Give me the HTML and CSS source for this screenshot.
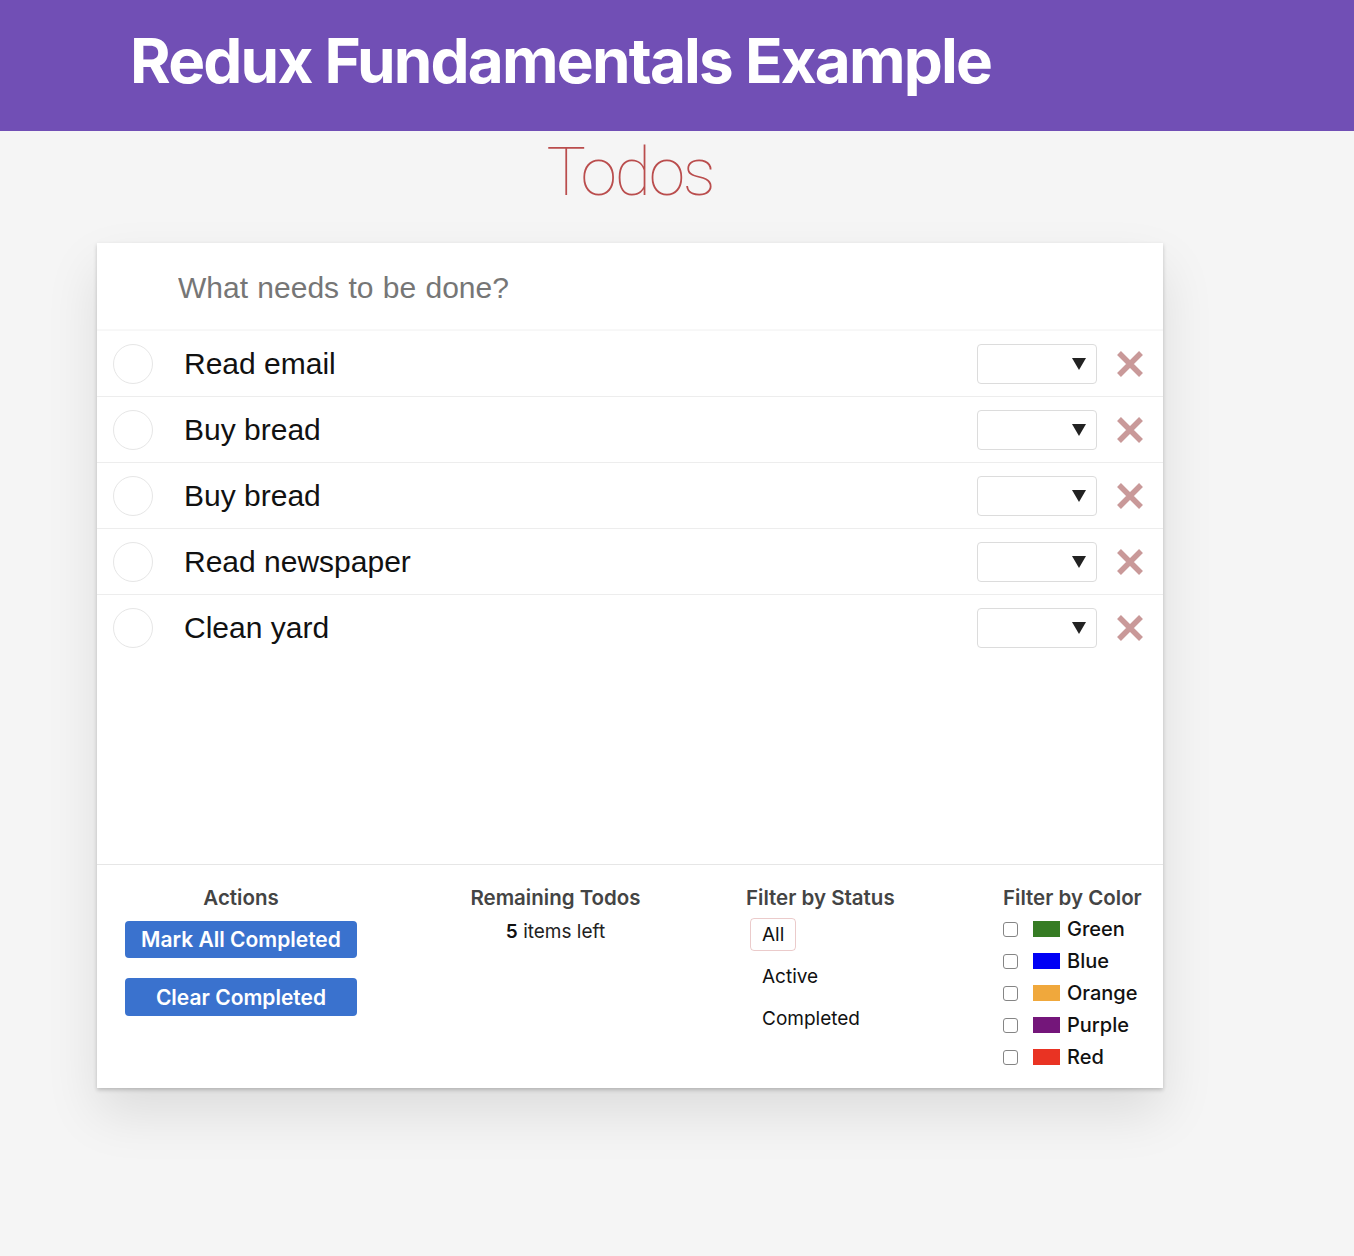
FILE: index.html
```html
<!DOCTYPE html>
<html lang="en">
<head>
<meta charset="utf-8">
<title>Redux Fundamentals Example</title>
<link rel="stylesheet" href="styles.css">
</head>
<body>
<header class="app-header">
  <h1 class="app-title">Redux Fundamentals Example</h1>
</header>
<main class="page">
  <section class="todo-wrap">
    <h2 class="todos-title">Todos</h2>
    <div class="todoapp">
      <input class="new-todo" placeholder="What needs to be done?">
      <ul class="todo-list">
        <li class="todo">
          <span class="toggle"></span>
          <span class="todo-text">Read email</span>
          <div class="color-select"><svg class="arrow" width="14" height="12" viewBox="0 0 14 12"><polygon points="0,0 14,0 7,12"/></svg></div>
          <button class="destroy" aria-label="delete"><svg width="28" height="28" viewBox="0 0 28 28"><path d="M3 3 L25 25 M25 3 L3 25"/></svg></button>
        </li>
        <li class="todo">
          <span class="toggle"></span>
          <span class="todo-text">Buy bread</span>
          <div class="color-select"><svg class="arrow" width="14" height="12" viewBox="0 0 14 12"><polygon points="0,0 14,0 7,12"/></svg></div>
          <button class="destroy" aria-label="delete"><svg width="28" height="28" viewBox="0 0 28 28"><path d="M3 3 L25 25 M25 3 L3 25"/></svg></button>
        </li>
        <li class="todo">
          <span class="toggle"></span>
          <span class="todo-text">Buy bread</span>
          <div class="color-select"><svg class="arrow" width="14" height="12" viewBox="0 0 14 12"><polygon points="0,0 14,0 7,12"/></svg></div>
          <button class="destroy" aria-label="delete"><svg width="28" height="28" viewBox="0 0 28 28"><path d="M3 3 L25 25 M25 3 L3 25"/></svg></button>
        </li>
        <li class="todo">
          <span class="toggle"></span>
          <span class="todo-text">Read newspaper</span>
          <div class="color-select"><svg class="arrow" width="14" height="12" viewBox="0 0 14 12"><polygon points="0,0 14,0 7,12"/></svg></div>
          <button class="destroy" aria-label="delete"><svg width="28" height="28" viewBox="0 0 28 28"><path d="M3 3 L25 25 M25 3 L3 25"/></svg></button>
        </li>
        <li class="todo">
          <span class="toggle"></span>
          <span class="todo-text">Clean yard</span>
          <div class="color-select"><svg class="arrow" width="14" height="12" viewBox="0 0 14 12"><polygon points="0,0 14,0 7,12"/></svg></div>
          <button class="destroy" aria-label="delete"><svg width="28" height="28" viewBox="0 0 28 28"><path d="M3 3 L25 25 M25 3 L3 25"/></svg></button>
        </li>
      </ul>
      <footer class="footer">
        <div class="col col-actions">
          <h5 class="col-title">Actions</h5>
          <button class="btn">Mark All Completed</button>
          <button class="btn">Clear Completed</button>
        </div>
        <div class="col col-remaining">
          <h5 class="col-title">Remaining Todos</h5>
          <div class="todo-count"><strong>5</strong> items left</div>
        </div>
        <div class="col col-status">
          <h5 class="col-title">Filter by Status</h5>
          <ul class="filters">
            <li><a class="filter selected">All</a></li>
            <li><a class="filter">Active</a></li>
            <li><a class="filter">Completed</a></li>
          </ul>
        </div>
        <div class="col col-colors">
          <h5 class="col-title">Filter by Color</h5>
          <label class="color-opt"><input type="checkbox" class="cb"><span class="swatch swatch-green"></span>Green</label>
          <label class="color-opt"><input type="checkbox" class="cb"><span class="swatch swatch-blue"></span>Blue</label>
          <label class="color-opt"><input type="checkbox" class="cb"><span class="swatch swatch-orange"></span>Orange</label>
          <label class="color-opt"><input type="checkbox" class="cb"><span class="swatch swatch-purple"></span>Purple</label>
          <label class="color-opt"><input type="checkbox" class="cb"><span class="swatch swatch-red"></span>Red</label>
        </div>
      </footer>
    </div>
  </section>
</main>
</body>
</html>
```

FILE: styles.css
```css
* { box-sizing: border-box; }

html, body {
  margin: 0;
  padding: 0;
}

body {
  background: #f5f5f5;
  font-family: "Liberation Sans", Arial, sans-serif;
  color: #111;
  min-height: 1256px;
}

.app-header {
  height: 131px;
  background: #714fb5;
  padding-left: 130px;
}

.app-title {
  margin: 0;
  font-family: Inter, "Liberation Sans", sans-serif;
  font-weight: 700;
  font-size: 62px;
  line-height: 121px;
  color: #fff;
  letter-spacing: -1.8px;
}

.page {
  padding-left: 97px;
}

.todo-wrap {
  width: 1066px;
}

.todos-title {
  margin: 2px 0 30px;
  text-align: center;
  font-family: Roboto, "Liberation Sans", sans-serif;
  font-weight: 100;
  font-size: 66px;
  line-height: 80px;
  letter-spacing: -2.2px;
  color: rgba(175, 47, 47, 0.85);
}

.todoapp {
  background: #fff;
  box-shadow: 0 2px 4px rgba(0, 0, 0, 0.2), 0 25px 50px rgba(0, 0, 0, 0.1);
}

.new-todo {
  display: block;
  width: 100%;
  height: 88px;
  margin: 0;
  border: none;
  outline: none;
  padding: 2px 16px 0 81px;
  font-family: "Liberation Sans", Arial, sans-serif;
  font-size: 30px;
  word-spacing: 1px;
  color: #111;
  background: #fff;
  box-shadow: inset 0 -2px 1px rgba(0, 0, 0, 0.03);
}

.new-todo::placeholder {
  color: #767676;
}

.todo-list {
  list-style: none;
  margin: 0;
  padding: 0;
  min-height: 533px;
}

.todo {
  display: flex;
  align-items: center;
  height: 66px;
  padding-left: 16px;
  border-bottom: 1px solid #ededed;
}

.todo:last-child {
  border-bottom: none;
  height: 65px;
}

.toggle {
  width: 40px;
  height: 40px;
  border-radius: 50%;
  border: 1px solid #e6e6e6;
  margin-right: 31px;
  flex: none;
}

.todo-text {
  flex: 1;
  font-size: 30px;
  color: #111;
}

.color-select {
  width: 120px;
  height: 40px;
  border: 1px solid #dcdcdc;
  border-radius: 4px;
  display: flex;
  align-items: center;
  justify-content: flex-end;
  padding-right: 10px;
  margin-right: 19px;
  flex: none;
}

.arrow polygon {
  fill: #222;
}

.destroy {
  width: 28px;
  height: 28px;
  padding: 0;
  margin: 0 19px 0 0;
  border: none;
  background: none;
  flex: none;
  display: block;
}

.destroy svg {
  display: block;
}

.destroy path {
  stroke: #c99999;
  stroke-width: 5.5;
  fill: none;
}

.footer {
  border-top: 1px solid #e6e6e6;
  height: 224px;
  padding: 21px 0 0 28px;
  display: grid;
  grid-template-columns: 232px 389px 257px 1fr;
  align-items: start;
  font-family: Inter, "Liberation Sans", sans-serif;
}

.col {
  display: flex;
  flex-direction: column;
}

.col-title {
  margin: 0;
  font-size: 20.5px;
  line-height: 24px;
  font-weight: 600;
  color: #444;
}

.col-actions {
  align-items: stretch;
  text-align: center;
}

.btn {
  height: 37px;
  margin-top: 11px;
  border: none;
  border-radius: 4px;
  background: #3a72ce;
  color: #fff;
  font-family: Inter, "Liberation Sans", sans-serif;
  font-size: 21px;
  font-weight: 600;
  padding: 0;
}

.btn + .btn {
  margin-top: 20px;
  height: 38px;
}

.col-remaining {
  text-align: center;
  padding-left: 8px;
}

.todo-count {
  margin-top: 11px;
  font-size: 19px;
  line-height: 22px;
  color: #222;
}

.todo-count strong {
  font-weight: 600;
  color: #111;
}

.filters {
  list-style: none;
  margin: 8px 0 0;
  padding: 0;
}

.filters li {
  margin-bottom: 9px;
}

.filter {
  display: inline-block;
  padding: 4px 11px;
  line-height: 23px;
  font-size: 19px;
  color: #111;
  border: 1px solid transparent;
  border-radius: 4px;
  margin-left: 4px;
}

.filter.selected {
  border-color: rgba(175, 47, 47, 0.25);
}

.col-colors .col-title {
  margin-bottom: 3px;
}

.color-opt {
  display: flex;
  align-items: center;
  height: 32px;
  font-size: 20px;
  font-weight: 500;
  color: #111;
}

.cb {
  appearance: none;
  -webkit-appearance: none;
  width: 15px;
  height: 15px;
  margin: 0 15px 0 0;
  border: 1px solid #858585;
  border-radius: 3px;
  background: #fff;
  flex: none;
}

.swatch {
  width: 27px;
  height: 16px;
  margin-right: 7px;
  flex: none;
}

.swatch-green { background: #367c24; }
.swatch-blue { background: #0000f5; }
.swatch-orange { background: #f0a83c; }
.swatch-purple { background: #74167a; }
.swatch-red { background: #e93323; }
```
